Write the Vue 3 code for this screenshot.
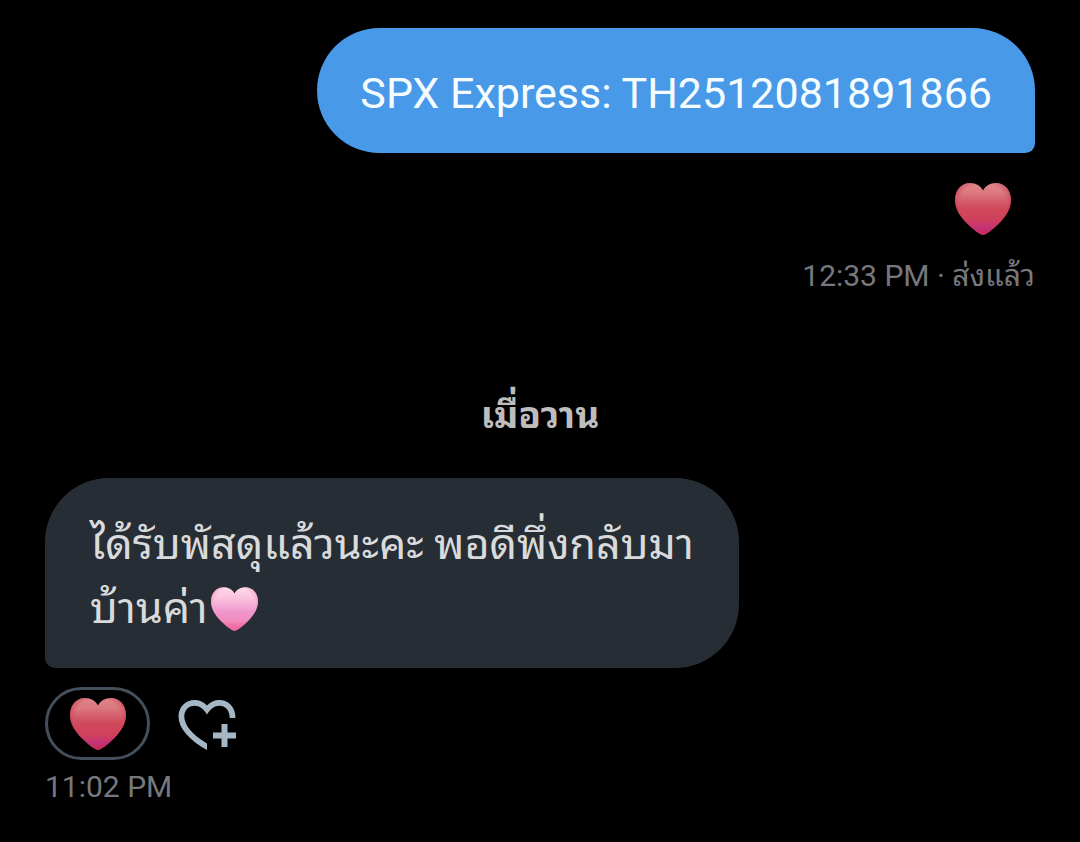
<script setup>
const sent = {
  text: 'SPX Express: TH2512081891866',
  time: '12:33 PM',
  status: 'ส่งแล้ว',
}
const day = 'เมื่อวาน'
const received = {
  lines: ['ได้รับพัสดุแล้วนะคะ พอดีพึ่งกลับมา', 'บ้านค่า'],
  time: '11:02 PM',
}
</script>

<template>
  <svg class="defs" aria-hidden="true">
    <defs>
      <linearGradient id="red-heart" x1="0" y1="0" x2="0" y2="1">
        <stop offset="0" stop-color="#df8589" />
        <stop offset="0.18" stop-color="#dc7a80" />
        <stop offset="0.48" stop-color="#d04a5b" />
        <stop offset="0.72" stop-color="#d03f5c" />
        <stop offset="0.88" stop-color="#c4327f" />
        <stop offset="1" stop-color="#cc2f66" />
      </linearGradient>
      <radialGradient id="red-edge" cx="0.5" cy="0.42" r="0.6">
        <stop offset="0.7" stop-color="#c52c48" stop-opacity="0" />
        <stop offset="1" stop-color="#c52c48" stop-opacity="0.7" />
      </radialGradient>
      <linearGradient id="pink-heart" x1="0" y1="0" x2="0" y2="1">
        <stop offset="0" stop-color="#ffdbe8" />
        <stop offset="0.25" stop-color="#fbc3df" />
        <stop offset="0.55" stop-color="#ee98ce" />
        <stop offset="0.78" stop-color="#f18bbd" />
        <stop offset="1" stop-color="#f0508c" />
      </linearGradient>
      <radialGradient id="pink-edge" cx="0.5" cy="0.42" r="0.6">
        <stop offset="0.72" stop-color="#f27fb4" stop-opacity="0" />
        <stop offset="1" stop-color="#f27fb4" stop-opacity="0.7" />
      </radialGradient>
      <path
        id="heart"
        d="M28 52 C26 52 19 47.500 12 40.500 C4.500 33 0 25.500 0 17 C0 7 6.500 0 15 0 C21 0 26 3 28 7.500 C30 3 35 0 41 0 C49.500 0 56 7 56 17 C56 25.500 51.500 33 44 40.500 C37 47.500 30 52 28 52 Z"
      />
    </defs>
  </svg>

  <main class="chat">
    <article class="message outgoing">
      <p class="bubble">{{ sent.text }}</p>
      <svg class="heart reaction" viewBox="0 0 56 52" role="img" aria-label="❤️">
        <use href="#heart" fill="url(#red-heart)" />
        <use href="#heart" fill="url(#red-edge)" />
      </svg>
      <p class="meta"><time>{{ sent.time }}</time> · {{ sent.status }}</p>
    </article>

    <h2 class="day">{{ day }}</h2>

    <article class="message incoming">
      <p class="bubble">
        {{ received.lines[0] }}<br />{{ received.lines[1] }}<svg class="inline-heart" viewBox="0 0 56 52" role="img" aria-label="🩷">
          <use href="#heart" fill="url(#pink-heart)" />
          <use href="#heart" fill="url(#pink-edge)" />
        </svg>
      </p>
      <div class="actions">
        <button class="pill" type="button" aria-label="❤️">
          <svg class="heart" viewBox="0 0 56 52" aria-hidden="true">
            <use href="#heart" fill="url(#red-heart)" />
            <use href="#heart" fill="url(#red-edge)" />
          </svg>
        </button>
        <button class="add" type="button" aria-label="+">
          <svg class="add-icon" viewBox="0 0 58 52" aria-hidden="true">
            <path
              class="outline"
              d="M29 52 C11 42 0.500 30 0.500 18.500 C0.500 9 7.500 2 16.500 2 C21.500 2 26 4 29 7.500 C32 4 36.500 2 41.500 2 C50.500 2 57.500 9 57.500 20 H51.700 C51.700 12.500 47.500 7.800 41.500 7.800 C36.500 7.800 32.500 11 29 16.500 C25.500 11 21.500 7.800 16.500 7.800 C10.500 7.800 6.300 12.500 6.300 18.500 C6.300 27 14 36.500 29 45.500 Z"
            />
            <path class="plus" d="M46.500 26 V49 M35 37.500 H58" />
          </svg>
        </button>
      </div>
      <p class="meta"><time>{{ received.time }}</time></p>
    </article>
  </main>
</template>

<style>
html,
body {
  background: #000;
}
</style>

<style scoped>
.defs {
  position: absolute;
  width: 0;
  height: 0;
}
.chat {
  display: flex;
  flex-direction: column;
  padding: 28px 45px 36px;
  background: #000;
  font-family: Roboto, "Noto Sans Thai Looped", "Noto Sans Thai", "Noto Sans", sans-serif;
}
.message {
  display: flex;
  flex-direction: column;
}
.outgoing {
  align-items: flex-end;
}
.incoming {
  align-items: flex-start;
}
.bubble {
  margin: 0;
  font-size: 43px;
  line-height: 64px;
}
.outgoing .bubble {
  padding: 33px 43px 28px;
  border-radius: 64px 64px 10px 64px;
  background: #4999e9;
  color: #f5fdff;
}
.incoming .bubble {
  padding: 34px 45px 28px;
  border-radius: 64px 64px 64px 10px;
  background: #262d34;
  color: #d9dadc;
}
.heart {
  display: block;
  width: 56px;
  height: 52px;
}
.reaction {
  margin: 30px 24px 0 0;
}
.inline-heart {
  width: 47px;
  height: 44px;
  margin-left: 3px;
  vertical-align: -8px;
}
.meta {
  margin: 0;
  color: #77787d;
  font-size: 30px;
  line-height: 40px;
}
.outgoing .meta {
  margin-top: 21px;
}
.day {
  margin: 96px 0 38px;
  color: #bdbdbd;
  font-size: 37px;
  font-weight: 700;
  line-height: 48px;
  text-align: center;
}
.actions {
  display: flex;
  align-items: center;
  gap: 28px;
  margin: 19px 0 7px;
}
button {
  padding: 0;
  border: 0;
  background: none;
  cursor: pointer;
}
.pill {
  display: flex;
  align-items: center;
  justify-content: center;
  width: 105px;
  height: 73px;
  border: 3px solid #434f5b;
  border-radius: 37px;
}
.add-icon {
  display: block;
  width: 58px;
  height: 52px;
}
.outline {
  fill: #a5b7c5;
}
.plus {
  fill: none;
  stroke: #a5b7c5;
  stroke-width: 6;
}
</style>
